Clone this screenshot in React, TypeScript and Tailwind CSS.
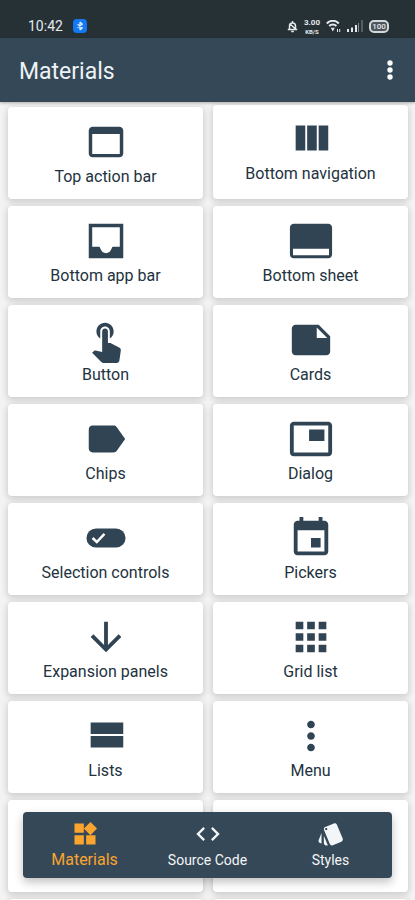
import type { ReactNode } from "react"
import clsx from "clsx"

type Component = {
	label: string
	icon: ReactNode
}

const components: Component[] = [
	{
		label: "Top action bar",
		icon: (
			<path d="M19 4H5c-1.11 0-2 .9-2 2v12c0 1.1.89 2 2 2h14c1.1 0 2-.9 2-2V6c0-1.1-.89-2-2-2zm.2 14.2H4.8V7.8h14.4v10.4z" />
		),
	},
	{
		label: "Bottom navigation",
		icon: <path d="M10 18h5V5h-5v13zm-6 0h5V5H4v13zM16 5v13h5V5h-5z" />,
	},
	{
		label: "Bottom app bar",
		icon: (
			<path
				fillRule="evenodd"
				d="M3 3h18v18H3zM4.8 4.8V15h3.4c.7 0 .7.5.9 1.1C9.6 17.4 10.6 18.4 12 18.4s2.4-1 2.9-2.3c.2-.6.2-1.1.9-1.1h3.4V4.8z"
			/>
		),
	},
	{
		label: "Bottom sheet",
		icon: (
			<path d="M21 3H3c-1.1 0-2 .9-2 2v14c0 1.1.9 2 2 2h18c1.1 0 2-.9 2-2V5c0-1.1-.9-2-2-2zm.4 16.4H2.6v-3.4h18.8v3.4z" />
		),
	},
	{
		label: "Button",
		icon: (
			<path d="M9 11.24V7.5C9 6.12 10.12 5 11.5 5S14 6.12 14 7.5v3.74c1.21-.81 2-2.18 2-3.74C16 5.01 13.99 3 11.5 3S7 5.01 7 7.5c0 1.56.79 2.93 2 3.74zm9.84 4.63l-4.54-2.26c-.17-.07-.35-.11-.54-.11H13v-6c0-.83-.67-1.5-1.5-1.5S10 6.67 10 7.5v10.74l-3.43-.72c-.08-.01-.15-.03-.24-.03-.31 0-.59.13-.79.33l-.79.8 4.94 4.94c.27.27.65.44 1.06.44h6.79c.75 0 1.33-.55 1.44-1.28l.75-5.27c.01-.07.02-.14.02-.2 0-.62-.38-1.16-.91-1.38z" />
		),
	},
	{
		label: "Cards",
		icon: (
			<path d="M22 10l-6-6H4c-1.1 0-2 .9-2 2v12.01c0 1.1.9 1.99 2 1.99l16-.01c1.1 0 2-.89 2-1.99v-8zm-7-4.5l5.5 5.5H15V5.5z" />
		),
	},
	{
		label: "Chips",
		icon: (
			<path d="M17.63 5.84C17.27 5.33 16.67 5 16 5L5 5.01C3.9 5.01 3 5.9 3 7v10c0 1.1.9 1.99 2 1.99L16 19c.67 0 1.27-.33 1.63-.84L22 12l-4.37-6.16z" />
		),
	},
	{
		label: "Dialog",
		icon: (
			<path d="M19 7h-8v6h8V7zm2-4H3c-1.1 0-2 .9-2 2v14c0 1.1.9 1.98 2 1.98h18c1.1 0 2-.88 2-1.98V5c0-1.1-.9-2-2-2zm0 16.01H3V4.98h18v14.03z" />
		),
	},
	{
		label: "Selection controls",
		icon: (
			<>
				<rect x="1.8" y="7" width="20.4" height="10" rx="5" />
				<path
					d="M5 12l2.2 2.1 4-4.2"
					fill="none"
					stroke="white"
					strokeWidth="1.3"
				/>
			</>
		),
	},
	{
		label: "Pickers",
		icon: (
			<path d="M17 12h-5v5h5v-5zM16 1v2H8V1H6v2H5c-1.11 0-1.99.9-1.99 2L3 19c0 1.1.89 2 2 2h14c1.1 0 2-.9 2-2V5c0-1.1-.9-2-2-2h-1V1h-2zm3 18H5V8h14v11z" />
		),
	},
	{
		label: "Expansion panels",
		icon: (
			<path d="M20 12l-1.41-1.41L13 16.17V4h-2v12.17l-5.58-5.59L4 12l8 8 8-8z" />
		),
	},
	{
		label: "Grid list",
		icon: (
			<path d="M4 8h4V4H4v4zm6 12h4v-4h-4v4zm-6 0h4v-4H4v4zm0-6h4v-4H4v4zm6 0h4v-4h-4v4zm6-10v4h4V4h-4zm-6 4h4V4h-4v4zm6 6h4v-4h-4v4zm0 6h4v-4h-4v4z" />
		),
	},
	{
		label: "Lists",
		icon: <path d="M4 18h17v-6H4v6zM4 5v6h17V5H4z" />,
	},
	{
		label: "Menu",
		icon: (
			<path d="M12 8c1.1 0 2-.9 2-2s-.9-2-2-2-2 .9-2 2 .9 2 2 2zm0 2c-1.1 0-2 .9-2 2s.9 2 2 2 2-.9 2-2-.9-2-2-2zm0 6c-1.1 0-2 .9-2 2s.9 2 2 2 2-.9 2-2-.9-2-2-2z" />
		),
	},
]

const tabs = [
	{
		label: "Materials",
		active: true,
		icon: (
			<path d="M13 13v8h8v-8h-8zM3 21h8v-8H3v8zM3 3v8h8V3H3zm13.66-1.31L11 7.34 16.66 13l5.66-5.66-5.66-5.65z" />
		),
	},
	{
		label: "Source Code",
		active: false,
		icon: (
			<path d="M9.4 16.6L4.8 12l4.6-4.6L8 6l-6 6 6 6 1.4-1.4zm5.2 0l4.6-4.6-4.6-4.6L16 6l6 6-6 6-1.4-1.4z" />
		),
	},
	{
		label: "Styles",
		active: false,
		icon: (
			<path d="M2.53 19.65l1.34.56v-9.03l-2.43 5.86c-.41 1.02.08 2.19 1.09 2.61zm19.5-3.7L17.07 3.98c-.31-.75-1.04-1.21-1.81-1.23-.26 0-.53.04-.79.15L7.1 5.95c-.75.31-1.21 1.03-1.23 1.8-.01.27.04.54.15.8l4.96 11.97c.31.76 1.05 1.22 1.83 1.23.26 0 .52-.05.77-.15l7.36-3.05c1.02-.42 1.51-1.59 1.09-2.6zM7.88 8.75c-.55 0-1-.45-1-1s.45-1 1-1 1 .45 1 1-.45 1-1 1zm-2 11c0 1.1.9 2 2 2h1.45l-3.45-8.34v6.34z" />
		),
	},
]

const cardStyle =
	"rounded-[4px] bg-white shadow-[0_2px_6px_1px_rgba(0,0,0,0.16)]"

function StatusBar() {
	return (
		<div className="flex h-[38px] shrink-0 items-center justify-between bg-[#263136] pt-[14px] pr-[26px] pl-[28px] text-[#e4e8ea]">
			<div className="flex items-center gap-[10px]">
				<span className="text-[14px] leading-[16px]">10:42</span>
				<svg viewBox="0 0 14 14" className="size-[14px]" fill="none">
					<rect width="14" height="14" rx="4" fill="#1279f2" />
					<path
						d="M7 3v8M4.5 5.2L9.3 8.8 7 11M4.5 8.8L9.3 5.2 7 3"
						stroke="#d5e9ff"
						strokeWidth="1.3"
					/>
				</svg>
			</div>
			<div className="flex items-center gap-[6px]">
				{/* Muted */}
				<svg viewBox="0 0 11 13" className="h-[13px] w-[11px]" fill="none" stroke="currentColor">
					<path d="M2.5 9.2V6a3 3 0 0 1 6 0v3.2M.8 9.4h9.4M4.2 11.5h2.6M5.5 3V1M2.5 3.5l6 5.5" strokeWidth="1.5" />
				</svg>
				<span className="flex flex-col items-center font-bold">
					<span className="text-[8px] leading-[10px]">3.00</span>
					<span className="text-[6px] leading-[7px]">KB/S</span>
				</span>
				{/* Wifi */}
				<svg viewBox="0 0 15 12" className="h-[12px] w-[15px]" fill="none" stroke="currentColor">
					<path d="M.8 3.5a8 8 0 0 1 12 0M3.2 6a5 5 0 0 1 7.2 0" strokeWidth="2" />
					<path d="M4.8 7.8h4L6.8 11.5z" fill="currentColor" stroke="none" />
					<path d="M11.5 9v3M13.7 9v3" strokeWidth="1" />
				</svg>
				{/* Signal */}
				<svg viewBox="0 0 16 12" className="h-[12px] w-[16px]" fill="currentColor">
					<path d="M0 9h2v3H0zM4 7.5h2V12H4zM8 5h2v7H8z" />
					<path d="M11 3h1v9h-1zM14.5 0h1v12h-1z" opacity="0.5" />
				</svg>
				<span className="flex h-[13px] w-[20px] items-center justify-center rounded-[5px] border-2 border-[#d3d8da] bg-[#4d565b] text-[8px] leading-[9px] font-medium">
					100
				</span>
			</div>
		</div>
	)
}

export default function App() {
	return (
		<div className="relative flex h-screen flex-col overflow-hidden bg-[#f3f3f3] font-[Roboto,sans-serif]">
			<StatusBar />

			{/* App bar */}
			<header className="z-10 flex h-[64px] shrink-0 items-center justify-between bg-[#354857] pr-[11px] pl-[19px] text-white shadow-[0_1px_3px_rgba(0,0,0,0.3)]">
				<h1 className="pt-[3px] text-[23px] leading-[28px] text-[#eef3f6]">Materials</h1>
				<button type="button" aria-label="More options">
					<svg viewBox="0 0 24 24" className="size-[28px]" fill="currentColor">
						<circle cx="12" cy="6" r="2.3" />
						<circle cx="12" cy="12" r="2.3" />
						<circle cx="12" cy="18" r="2.3" />
					</svg>
				</button>
			</header>

			{/* Component grid */}
			<main className="grid grid-cols-2 content-start gap-x-[10px] gap-y-[7px] pt-[3px] pr-[7px] pl-[8px]">
				{components.map((component, index) => (
					<button
						key={component.label}
						type="button"
						className={clsx(
							cardStyle,
							"flex flex-col items-center justify-center gap-[2px] text-[#22323e]",
							index === 0 && "mt-[2px]",
							index === 1 ? "h-[94px] pb-[4px]" : "h-[92px]"
						)}
					>
						<svg viewBox="0 0 24 24" className="size-[46px] fill-[#304454]">
							{component.icon}
						</svg>
						<span className="text-[16px] leading-[20px]">{component.label}</span>
					</button>
				))}
				{/* Rows that continue below the navigation */}
				<div className={clsx(cardStyle, "h-[92px]")} />
				<div className={clsx(cardStyle, "h-[92px]")} />
				<div className={clsx(cardStyle, "h-[92px]")} />
				<div className={clsx(cardStyle, "h-[92px]")} />
			</main>

			{/* Floating navigation */}
			<nav className="absolute inset-x-[23px] bottom-[22px] z-10 grid h-[66px] grid-cols-3 rounded-[4px] bg-[#354857] shadow-[0_4px_10px_rgba(0,0,0,0.25)]">
				{tabs.map(tab => (
					<button
						key={tab.label}
						type="button"
						className={clsx(
							"flex flex-col items-center justify-center gap-[2px]",
							tab.active ? "text-[#f9a52f]" : "text-[#f3f6f8]"
						)}
					>
						<svg viewBox="0 0 24 24" className="size-[28px]" fill="currentColor">
							{tab.icon}
						</svg>
						<span
							className={clsx(
								"leading-[20px]",
								tab.active ? "text-[16px]" : "text-[14px]"
							)}
						>
							{tab.label}
						</span>
					</button>
				))}
			</nav>
		</div>
	)
}
